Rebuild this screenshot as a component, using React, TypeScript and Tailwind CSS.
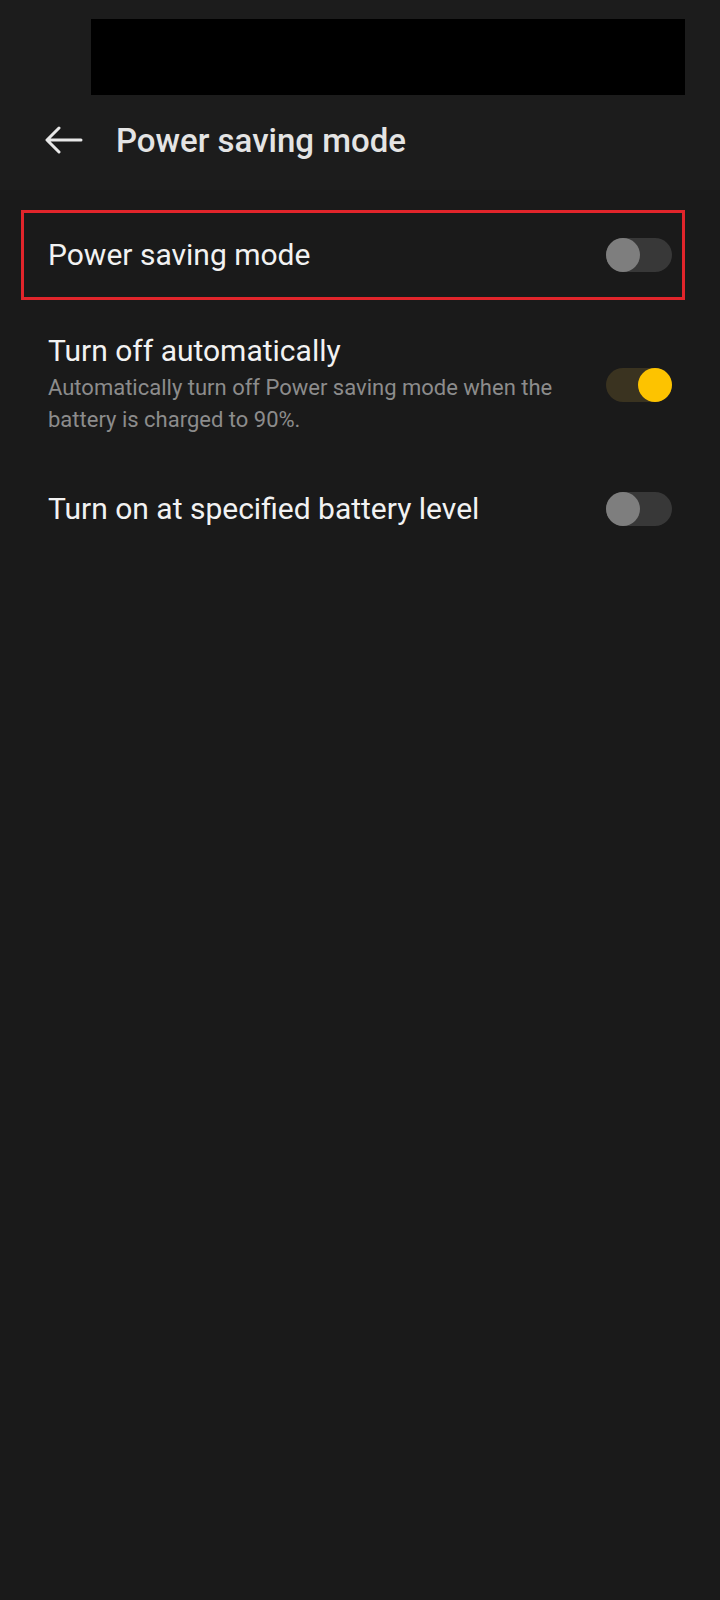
import React from "react";

function Toggle({ on }: { on: boolean }) {
  return (
    <div
      className={`w-[66px] h-[34px] rounded-full flex shrink-0 ${
        on ? "bg-[#3a3320] justify-end" : "bg-[#383838] justify-start"
      }`}
    >
      <div
        className={`w-[34px] h-[34px] rounded-full ${
          on ? "bg-[#fdc300]" : "bg-[#7e7e7e]"
        }`}
      />
    </div>
  );
}

export default function App() {
  return (
    <div
      className="w-[720px] min-h-[1600px] bg-[#1a1a1a] text-[#f2f2f2]"
      style={{ fontFamily: "Roboto, 'Liberation Sans', sans-serif" }}
    >
      {/* Header */}
      <header className="h-[190px] bg-[#1c1c1c] flex flex-col">
        <div className="mt-[19px] ml-[91px] w-[594px] h-[76px] bg-black" />
        <div className="flex items-center h-[90px] pl-[45px]">
          <svg
            width="38"
            height="28"
            viewBox="0 0 38 28"
            fill="none"
            stroke="#e8e8e8"
            strokeWidth="3"
            strokeLinecap="round"
            strokeLinejoin="round"
          >
            <path d="M36 14H3M14 2L2 14l12 12" />
          </svg>
          <h1 className="ml-[33px] text-[33px] font-medium text-[#e4e4e4] leading-none">
            Power saving mode
          </h1>
        </div>
      </header>

      {/* Rows */}
      <div className="pt-[20px] flex flex-col">
        <div className="ml-[21px] mr-[35px] h-[90px] border-[3px] border-[#e1252b] flex items-center justify-between pl-[24px] pr-[10px]">
          <span className="text-[30px] leading-[36px]">Power saving mode</span>
          <Toggle on={false} />
        </div>

        <div className="mt-[33px] px-[48px] flex items-center justify-between">
          <div className="flex flex-col">
            <span className="text-[30px] leading-[36px]">Turn off automatically</span>
            <span className="mt-[3px] text-[22px] leading-[32px] text-[#8c8c8c] w-[530px]">
              Automatically turn off Power saving mode when the battery is charged to 90%.
            </span>
          </div>
          <Toggle on={true} />
        </div>

        <div className="mt-[55px] px-[48px] flex items-center justify-between">
          <span className="text-[30px] leading-[36px]">
            Turn on at specified battery level
          </span>
          <Toggle on={false} />
        </div>
      </div>
    </div>
  );
}
